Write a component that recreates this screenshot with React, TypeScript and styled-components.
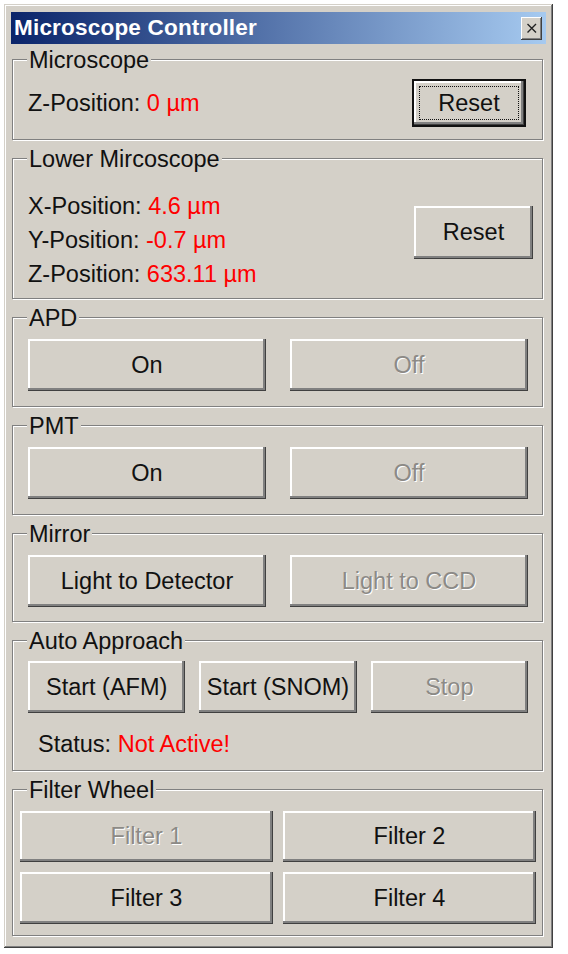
import { FC, ReactNode } from "react"
import styled, { createGlobalStyle, css } from "styled-components"

const GlobalStyle = createGlobalStyle`
  html, body {
    margin: 0;
    padding: 0;
    background: #ffffff;
  }
  body {
    font-family: "Liberation Sans", Arial, sans-serif;
  }
`

const face = "#d4d0c8"
const textSize = "23.5px"

export const Window = styled.div`
  box-sizing: border-box;
  width: 549px;
  height: 944px;
  margin: 4px 0 0 4px;
  padding: 7px 7px 0 7px;
  background: ${face};
  box-shadow:
    inset -1px -1px 0 #404040,
    inset 1px 1px 0 ${face},
    inset -2px -2px 0 #808080,
    inset 2px 2px 0 #ffffff;
  display: flex;
  flex-direction: column;
`

export const TitleBar = styled.div`
  height: 32px;
  margin-top: 1px;
  display: flex;
  align-items: center;
  justify-content: space-between;
  padding: 0 4px 0 3px;
  background: linear-gradient(to right, #0a246a 0%, #a6caf0 100%);
`

export const Title = styled.span`
  color: #ffffff;
  font-family: "Liberation Sans", Arial, sans-serif;
  font-weight: 700;
  font-size: 22.5px;
  letter-spacing: 0.2px;
`

export const CloseButton = styled.button`
  width: 21px;
  height: 23px;
  padding: 0;
  border: none;
  background: ${face};
  display: flex;
  align-items: center;
  justify-content: center;
  box-shadow:
    inset -1px -1px 0 #404040,
    inset 1px 1px 0 #ffffff,
    inset -2px -2px 0 #808080;
`

export const Content = styled.div`
  display: flex;
  flex-direction: column;
  gap: 18px;
  padding: 15px 3px 0 1px;
`

export const Group = styled.div<{ $pad: string }>`
  position: relative;
  border: 1px solid #808080;
  box-shadow: inset 1px 1px 0 #ffffff, 1px 1px 0 #ffffff;
  padding: ${(p) => p.$pad};
`

export const Legend = styled.span`
  position: absolute;
  top: -12px;
  left: 14px;
  padding: 0 2px;
  background: ${face};
  font-size: ${textSize};
  line-height: 24px;
  color: #111;
`

export const Row = styled.div<{ $align?: string }>`
  display: flex;
  align-items: ${(p) => p.$align ?? "center"};
  justify-content: space-between;
`

export const ButtonGrid = styled.div<{ $cols: number; $gap: number; $rowGap?: number }>`
  display: grid;
  grid-template-columns: repeat(${(p) => p.$cols}, 1fr);
  column-gap: ${(p) => p.$gap}px;
  row-gap: ${(p) => p.$rowGap ?? 0}px;
`

export const Readouts = styled.div`
  display: flex;
  flex-direction: column;
`

export const Readout = styled.div<{ $indent?: number; $top?: number }>`
  font-size: ${textSize};
  line-height: 34px;
  color: #111;
  padding-left: ${(p) => p.$indent ?? 0}px;
  margin-top: ${(p) => p.$top ?? 0}px;
  white-space: nowrap;
`

export const Value = styled.span`
  color: #ff0000;
`

export const Button = styled.button<{ $w?: number; $h?: number; $top?: number; $default?: boolean }>`
  position: relative;
  box-sizing: border-box;
  width: ${(p) => (p.$w ? `${p.$w}px` : "100%")};
  height: ${(p) => p.$h ?? 52}px;
  margin-top: ${(p) => p.$top ?? 0}px;
  padding: 0;
  border: none;
  background: ${face};
  font-family: "Liberation Sans", Arial, sans-serif;
  font-size: ${textSize};
  color: #111;
  white-space: nowrap;
  box-shadow:
    inset -1px -1px 0 #404040,
    inset -3px -3px 0 #808080,
    inset 2px 2px 0 #ffffff;
  &:disabled {
    color: #8c8a86;
    text-shadow: 1px 1px 0 #ffffff;
  }
  ${(p) =>
    p.$default &&
    css`
      border: 2px solid #111;
      &::after {
        content: "";
        position: absolute;
        inset: 5px;
        border: 1px dotted #111;
      }
    `}
`

const Section: FC<{ label: string; pad: string; children: ReactNode }> = ({ label, pad, children }) => (
  <Group $pad={pad}>
    <Legend>{label}</Legend>
    {children}
  </Group>
)

export default function App() {
  return (
    <>
      <GlobalStyle />
      <Window>
        <TitleBar>
          <Title>Microscope Controller</Title>
          <CloseButton aria-label="Close">
            <svg width="12" height="11" viewBox="0 0 12 11">
              <path d="M1.5 1 L10 9.5 M10 1 L1.5 9.5" stroke="#222" strokeWidth="1.4" fill="none" />
            </svg>
          </CloseButton>
        </TitleBar>
        <Content>
          <Section label="Microscope" pad="19px 16px 12px 15px">
            <Row>
              <Readout>
                Z-Position: <Value>0 µm</Value>
              </Readout>
              <Button $w={114} $h={48} $default>
                Reset
              </Button>
            </Row>
          </Section>

          <Section label="Lower Mircoscope" pad="30px 9px 7px 15px">
            <Row $align="flex-start">
              <Readouts>
                <Readout>
                  X-Position: <Value>4.6 µm</Value>
                </Readout>
                <Readout>
                  Y-Position: <Value>-0.7 µm</Value>
                </Readout>
                <Readout>
                  Z-Position: <Value>633.11 µm</Value>
                </Readout>
              </Readouts>
              <Button $w={119} $h={53} $top={17}>
                Reset
              </Button>
            </Row>
          </Section>

          <Section label="APD" pad="21px 14px 15px 15px">
            <ButtonGrid $cols={2} $gap={24}>
              <Button>On</Button>
              <Button disabled>Off</Button>
            </ButtonGrid>
          </Section>

          <Section label="PMT" pad="21px 14px 15px 15px">
            <ButtonGrid $cols={2} $gap={24}>
              <Button>On</Button>
              <Button disabled>Off</Button>
            </ButtonGrid>
          </Section>

          <Section label="Mirror" pad="21px 14px 14px 15px">
            <ButtonGrid $cols={2} $gap={24}>
              <Button>Light to Detector</Button>
              <Button disabled>Light to CCD</Button>
            </ButtonGrid>
          </Section>

          <Section label="Auto Approach" pad="20px 14px 9px 15px">
            <ButtonGrid $cols={3} $gap={14}>
              <Button>Start (AFM)</Button>
              <Button>Start (SNOM)</Button>
              <Button disabled>Stop</Button>
            </ButtonGrid>
            <Readout $indent={10} $top={14}>
              Status: <Value>Not Active!</Value>
            </Readout>
          </Section>

          <Section label="Filter Wheel" pad="21px 6px 11px 7px">
            <ButtonGrid $cols={2} $gap={10} $rowGap={10}>
              <Button $h={51} disabled>
                Filter 1
              </Button>
              <Button $h={51}>Filter 2</Button>
              <Button $h={52}>Filter 3</Button>
              <Button $h={52}>Filter 4</Button>
            </ButtonGrid>
          </Section>
        </Content>
      </Window>
    </>
  )
}
